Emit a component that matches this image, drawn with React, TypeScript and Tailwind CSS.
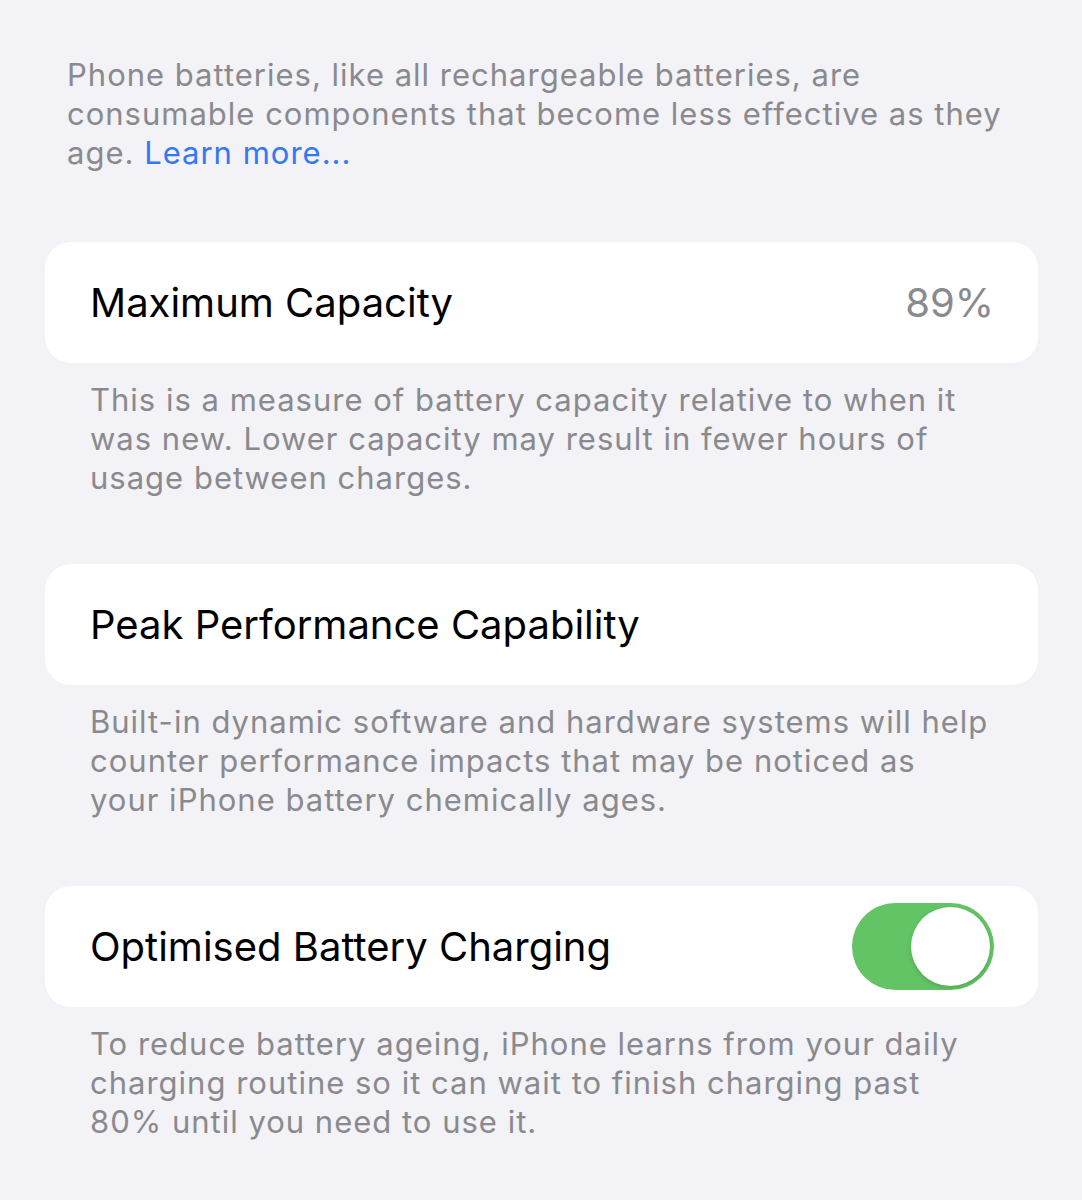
import React from 'react';

const font = { fontFamily: 'Inter, "Noto Sans", sans-serif' };

const Card: React.FC<{ children: React.ReactNode }> = ({ children }) => (
  <div className="flex h-[121px] items-center justify-between rounded-[26px] bg-white pl-[45px] pr-[44px]">
    {children}
  </div>
);

const Footer: React.FC<{ children: React.ReactNode }> = ({ children }) => (
  <p className="mt-[17px] pl-[45px] text-[31px] leading-[39px] tracking-[1px] text-[#8a8a8e]">{children}</p>
);

export default function App() {
  return (
    <div className="min-h-[1200px] w-[1082px] bg-[#f2f2f7] pl-[45px] pr-[44px] pt-[55px]" style={font}>
      <p className="pl-[22px] text-[31px] leading-[39px] tracking-[1px] text-[#8a8a8e]">
        Phone batteries, like all rechargeable batteries, are
        <br />
        consumable components that become less effective as they
        <br />
        age. <span className="text-[#3478f6]">Learn more...</span>
      </p>

      <div className="mt-[70px]">
        <Card>
          <span className="text-[40px] text-black">Maximum Capacity</span>
          <span className="text-[40px] text-[#8a8a8e]">89%</span>
        </Card>
        <Footer>
          This is a measure of battery capacity relative to when it
          <br />
          was new. Lower capacity may result in fewer hours of
          <br />
          usage between charges.
        </Footer>
      </div>

      <div className="mt-[67px]">
        <Card>
          <span className="text-[40px] text-black">Peak Performance Capability</span>
        </Card>
        <Footer>
          Built-in dynamic software and hardware systems will help
          <br />
          counter performance impacts that may be noticed as
          <br />
          your iPhone battery chemically ages.
        </Footer>
      </div>

      <div className="mt-[67px]">
        <Card>
          <span className="text-[40px] text-black">Optimised Battery Charging</span>
          <div className="flex h-[87px] w-[142px] items-center justify-end rounded-full bg-[#62c464] p-[4px]">
            <div className="h-[79px] w-[79px] rounded-full bg-white shadow-[0_2px_4px_rgba(0,0,0,0.15)]" />
          </div>
        </Card>
        <Footer>
          To reduce battery ageing, iPhone learns from your daily
          <br />
          charging routine so it can wait to finish charging past
          <br />
          80% until you need to use it.
        </Footer>
      </div>
    </div>
  );
}
